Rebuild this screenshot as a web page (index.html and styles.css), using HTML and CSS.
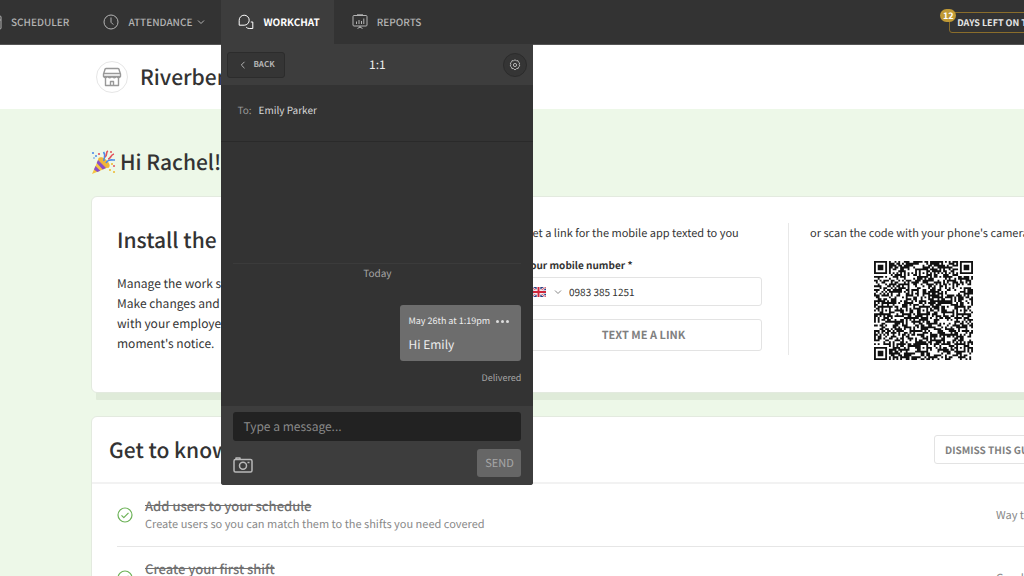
FILE: index.html
```html
<!DOCTYPE html>
<html lang="en">
<head>
<meta charset="utf-8">
<title>WorkChat</title>
<meta name="viewport" content="width=device-width, initial-scale=1">
<link rel="stylesheet" href="styles.css">
</head>
<body>
<div class="app">
  <header class="topbar">
    <nav class="nav">
      <div class="nav-item">
        <a class="nav-link" href="#scheduler">
          <svg class="nav-icon" viewBox="0 0 16 16"><rect x="1" y="2" width="14" height="13" rx="1"/><path d="M1 6h14M5 0v3M11 0v3"/></svg>
          <span>SCHEDULER</span>
        </a>
      </div>
      <div class="nav-item">
        <a class="nav-link" href="#attendance">
          <svg class="nav-icon" viewBox="0 0 16 16"><circle cx="8" cy="8" r="7"/><path d="M8 3.500v4.800l2.300 2.300"/></svg>
          <span>ATTENDANCE</span>
          <svg class="caret" viewBox="0 0 8 8"><path d="M1 2.500l3 3 3-3"/></svg>
        </a>
      </div>
      <div class="nav-item active">
        <a class="nav-link" href="#workchat">
          <svg class="nav-icon" viewBox="0 0 16 16"><path d="M1.200 11.200V6.300a5 5 0 1 1 5 4.900z"/><path d="M12.800 8h2v6.500h-3.600c-1.200 0-2.300-.5-3-1.300"/></svg>
          <span>WORKCHAT</span>
        </a>
        <section class="chat">
          <div class="chat-head">
            <button class="back" type="button"><svg viewBox="0 0 8 8"><path d="M5.500 .8L2.300 4l3.200 3.200"/></svg>BACK</button>
            <h2 class="chat-title">1:1</h2>
            <button class="gear" type="button" aria-label="Chat settings">
              <svg viewBox="0 0 12 12"><path d="M6 .8l1.300.9 1.600-.1.500 1.500 1.300.9-.5 1.500.6 1.500-1.300 1-.4 1.500-1.600.1L6 11l-1.500-1.400-1.600-.1-.4-1.500-1.300-1 .6-1.500-.5-1.500 1.300-.9.500-1.500 1.600.1z"/><circle cx="6" cy="6" r="1.600"/></svg>
            </button>
          </div>
          <div class="chat-to"><span class="to-label">To:</span><span>Emily Parker</span></div>
          <div class="chat-log">
            <div class="day">Today</div>
            <div class="bubble">
              <div class="bubble-meta"><time>May 26th at 1:19pm</time>
                <button class="more" type="button" aria-label="Message options"><i></i><i></i><i></i></button>
              </div>
              <p class="bubble-text">Hi Emily</p>
            </div>
            <div class="status">Delivered</div>
          </div>
          <form class="composer">
            <input class="message" type="text" placeholder="Type a message..." aria-label="Message">
            <div class="composer-actions">
              <button class="camera" type="button" aria-label="Add photo">
                <svg viewBox="0 0 20 16"><rect x="1" y="2.500" width="18" height="12.500" rx="1.500"/><circle cx="10" cy="8.800" r="3.500"/><path d="M3 2V1h4v1M14.500 5.500h2"/></svg>
              </button>
              <button class="send" type="button">SEND</button>
            </div>
          </form>
        </section>
      </div>
      <div class="nav-item">
        <a class="nav-link" href="#reports">
          <svg class="nav-icon" viewBox="0 0 16 16"><rect x="1" y="1.500" width="14" height="10.500" rx="1"/><path d="M4.500 10V7.500M7 10V6M9.500 10V7M11.800 10V4.500M8 12v2M5.500 14.500L8 13l2.500 1.500M5 .8h6"/></svg>
          <span>REPORTS</span>
        </a>
      </div>
    </nav>
    <a class="trial" href="#trial"><span class="trial-count">12</span>DAYS LEFT ON TRIAL</a>
  </header>

  <div class="location">
    <span class="store">
      <svg viewBox="0 0 20 20"><path d="M4 1.500h12a1 1 0 0 1 1 1L18.500 7v2.500h-17V7L3 2.500a1 1 0 0 1 1-1zM1.500 6.500h17M1.500 9.500c1.200 1.600 2.800 1.600 4 0 1.200 1.600 3.300 1.600 4.500 0 1.200 1.600 3.300 1.600 4.500 0 1.200 1.600 2.800 1.600 4 0M3.500 11v7.500h13V11M8.500 18.500v-4h3v4"/></svg>
    </span>
    <h1>Riverbend</h1>
  </div>

  <main class="content">
    <h2 class="greeting">
      <svg viewBox="0 0 25 25">
        <path d="M8 8L1 24l17-7z" fill="#f7c540"/>
        <ellipse cx="13" cy="12.500" rx="3.500" ry="7" transform="rotate(-48 13 12.500)" fill="#f0b63a"/>
        <path d="M7 10l8 8-3.300 1.400L5.700 13zM4.500 16l4.800 4.800-3 1.200L3 19.500z" fill="#8a4fc7"/>
        <path d="M13 11c-1-3 3-4-.500-9M15 13c2-4 5-3 9-3" fill="none" stroke="#4d8be8" stroke-width="1.600"/>
        <path d="M14 7c3-1 0-5 3-6M17 9c3 0 2-4 6-5" fill="none" stroke="#e2525c" stroke-width="1.600"/>
        <g fill="#e2525c"><circle cx="8" cy="4" r="1.100"/><circle cx="23" cy="16" r="1"/><circle cx="20" cy="2" r="1"/></g>
        <g fill="#4d8be8"><circle cx="2" cy="3" r="1.100"/><circle cx="5" cy="6" r="1"/><circle cx="3" cy="8" r=".8"/></g>
        <g fill="#edb92e"><circle cx="21" cy="14" r="1"/><circle cx="19" cy="20" r="1"/><circle cx="23" cy="22" r="1"/></g>
      </svg>
      Hi Rachel!
    </h2>

    <section class="card install">
      <div class="install-copy">
        <h2>Install the app</h2>
        <p>Manage the work schedule on the go.<br>Make changes and always stay in touch<br>with your employees and team at a<br>moment's notice.</p>
      </div>
      <form class="install-form">
        <p class="lead">Get a link for the mobile app texted to you</p>
        <label for="mobile">Your mobile number *</label>
        <div class="phone">
          <button class="country" type="button" aria-label="Country code: United Kingdom">
            <svg class="flag" viewBox="0 0 15 10"><path fill="#2b3f80" d="M0 0h15v10H0z"/><path d="M0 0l15 10M15 0L0 10" stroke="#fff" stroke-width="2.200"/><path d="M0 0l15 10M15 0L0 10" stroke="#d0273c" stroke-width=".8"/><path d="M7.500 0v10M0 5h15" stroke="#fff" stroke-width="3.600"/><path d="M7.500 0v10M0 5h15" stroke="#d0273c" stroke-width="2"/></svg>
            <svg class="caret" viewBox="0 0 8 8"><path d="M1 2.500l3 3 3-3"/></svg>
          </button>
          <input id="mobile" type="tel" value="0983 385 1251">
        </div>
        <button class="outline text-link" type="button">TEXT ME A LINK</button>
      </form>
      <div class="install-scan">
        <p class="lead">or scan the code with your phone's camera</p>
        <svg class="qr" viewBox="0 0 53 53" role="img" aria-label="QR code"><path id="qr-modules"/></svg>
      </div>
    </section>

    <section class="card guide">
      <div class="guide-head">
        <h2>Get to know us</h2>
        <button class="outline dismiss" type="button">DISMISS THIS GUIDE</button>
      </div>
      <ul class="steps">
        <li>
          <svg class="check" viewBox="0 0 16 16"><circle cx="8" cy="8" r="7"/><path d="M4.500 8.300l2.300 2.300 4.700-4.800"/></svg>
          <div class="step-copy"><h3>Add users to your schedule</h3><p>Create users so you can match them to the shifts you need covered</p></div>
          <span class="praise">Way to go!</span>
        </li>
        <li>
          <svg class="check" viewBox="0 0 16 16"><circle cx="8" cy="8" r="7"/><path d="M4.500 8.300l2.300 2.300 4.700-4.800"/></svg>
          <div class="step-copy"><h3>Create your first shift</h3><p>Start building your schedule</p></div>
          <span class="praise">Good job!</span>
        </li>
      </ul>
    </section>
  </main>
</div>
<script src="qr.js"></script>
</body>
</html>
```
FILE: styles.css
```css
* { box-sizing: border-box; }

body {
  margin: 0;
  height: 100vh;
  overflow: hidden;
  background: #edf8e8;
  color: #333;
  font-family: "Noto Sans CJK SC", "Noto Sans", sans-serif;
  font-size: 12px;
  line-height: 20px;
  text-rendering: geometricPrecision;
}

h1, h2, h3, p, ul { margin: 0; padding: 0; }
h1, h2, h3 { font-weight: 500; }
button, input { font: inherit; color: inherit; margin: 0; text-rendering: inherit; }
button { padding: 0; border: 0; background: none; cursor: pointer; }
a { color: inherit; text-decoration: none; }
svg { display: block; flex: none; fill: none; stroke-linejoin: round; }

.app { margin-right: -165px; }

/* Top bar */
.topbar {
  display: flex;
  align-items: center;
  justify-content: space-between;
  height: 45px;
  padding-right: 134px;
  background: #333;
  border-bottom: 1px solid #555;
  color: #b4b4b4;
}
.nav { display: flex; margin-left: -32px; height: 44px; }
.nav-item { position: relative; }
.nav-link {
  display: flex;
  align-items: center;
  height: 44px;
  padding: 0 16px 0 18px;
  gap: 9px;
  font-size: 10px;
  font-weight: 500;
}
.nav-icon { width: 16px; height: 16px; stroke: currentColor; }
.caret { width: 8px; height: 8px; stroke: currentColor; }
.nav-link .caret { margin-left: -4px; }
.active .nav-link { padding: 0 14px 0 17px; background: #3d3d3d; color: #fff; font-weight: 700; }
.trial {
  position: relative;
  height: 21px;
  padding: 0 7px;
  border: 1px solid #8a6d2b;
  border-radius: 3px;
  color: #e6e6e6;
  font-size: 9px;
  font-weight: 700;
  line-height: 19px;
}
.trial-count {
  position: absolute;
  top: -4px;
  left: -10px;
  width: 16px;
  border-radius: 7px;
  background: #c09a36;
  color: #fff;
  line-height: 13px;
  text-align: center;
}

/* Chat panel */
.chat {
  position: absolute;
  top: 100%;
  left: 0;
  z-index: 2;
  width: 312px;
  border-radius: 0 0 3px 3px;
  background: #333;
  color: #d8d8d8;
  overflow: hidden;
}
.chat-head {
  display: grid;
  grid-template-columns: 1fr auto 1fr;
  align-items: center;
  height: 41px;
  padding: 0 6px;
  background: #3d3d3d;
}
.back {
  display: flex;
  align-items: center;
  gap: 6px;
  width: 58px;
  height: 26px;
  padding-left: 11px;
  border: 1px solid #2c2c2c;
  border-radius: 3px;
  background: #353535;
  color: #b4b4b4;
  font-size: 8px;
  font-weight: 700;
}
.back svg { width: 8px; height: 8px; stroke: currentColor; }
.chat-title { font-size: 12px; font-weight: 400; color: #eee; }
.gear {
  display: grid;
  place-items: center;
  justify-self: end;
  width: 24px;
  height: 24px;
  border: 1px solid #2c2c2c;
  border-radius: 50%;
  background: #353535;
}
.gear svg { width: 12px; height: 12px; stroke: #b4b4b4; }
.chat-to {
  display: flex;
  gap: 7px;
  height: 57px;
  padding: 15px 16px;
  border-bottom: 1px solid #2a2a2a;
  font-size: 10px;
}
.to-label { color: #999; }
.chat-log {
  display: flex;
  flex-direction: column;
  align-items: flex-end;
  justify-content: flex-end;
  height: 264px;
  padding: 0 12px 18px;
}
.day {
  align-self: stretch;
  border-top: 1px solid #3b3b3b;
  color: #a6a6a6;
  font-size: 10px;
  line-height: 18px;
  text-align: center;
}
.bubble {
  width: 121px;
  margin: 23px 0 7px;
  padding: 6px 8px 2px;
  border-radius: 3px;
  background: #6d6d6d;
  color: #eee;
}
.bubble-meta { display: flex; justify-content: space-between; font-size: 9px; white-space: nowrap; }
.more { display: flex; align-items: center; gap: 2px; padding-right: 4px; }
.more i { width: 3px; height: 3px; border-radius: 50%; background: #ddd; }
.bubble-text { line-height: 28px; }
.status { color: #a6a6a6; font-size: 9px; }
.composer { padding: 6px 12px 8px; background: #3d3d3d; }
.message {
  display: block;
  width: 100%;
  height: 29px;
  padding: 0 10px;
  border: 0;
  border-radius: 3px;
  background: #222;
}
.message::placeholder { color: #8a8a8a; opacity: 1; }
.composer-actions { display: flex; align-items: center; justify-content: space-between; margin-top: 8px; }
.camera { padding-top: 4px; }
.camera svg { width: 20px; height: 16px; stroke: #b8b8b8; stroke-width: 1.5; }
.send {
  width: 44px;
  height: 28px;
  border-radius: 3px;
  background: #666;
  color: #a6a6a6;
  font-size: 11px;
}

/* Location strip */
.location {
  display: flex;
  align-items: center;
  gap: 12px;
  height: 64px;
  padding-left: 96px;
  background: #fff;
}
.store {
  display: grid;
  place-items: center;
  width: 32px;
  height: 32px;
  border: 1px solid #e6e6e6;
  border-radius: 50%;
}
.store svg { width: 20px; height: 20px; stroke: #999; stroke-width: 1.4; }
h1, .content h2 { font-size: 21px; line-height: 28px; }

/* Content */
.content { padding: 39px 91px 0; }
.greeting { display: flex; align-items: center; gap: 4px; margin-bottom: 20px; }
.greeting svg { width: 25px; height: 25px; }
.card { border: 1px solid #e3eadf; border-radius: 6px; background: #fff; }
.install {
  display: flex;
  height: 197px;
  padding: 26px 40px 0 25px;
  box-shadow: 0 12px 0 -5px #dfebd9;
}
.install-copy { flex: 1; padding-top: 3px; }
.install-copy p { margin-top: 20px; white-space: nowrap; }
.lead { font-size: 11px; white-space: nowrap; }
.install-form {
  width: 264px;
  height: 132px;
  padding-right: 26px;
  border-right: 1px solid #e8e8e8;
}
.install-form label { display: block; margin-top: 13px; font-size: 10px; font-weight: 700; line-height: 18px; }
.phone {
  display: flex;
  align-items: center;
  height: 29px;
  margin: 3px 0 13px;
  border: 1px solid #e3e3e3;
  border-radius: 3px;
}
.country { display: flex; align-items: center; gap: 8px; padding-left: 5px; color: #888; }
.flag { width: 15px; height: 10px; }
.phone input { flex: 1; min-width: 0; padding: 0 7px; border: 0; background: none; font-size: 10px; }
.outline {
  border: 1px solid #e3e3e3;
  border-radius: 3px;
  background: #fff;
  color: #808080;
  font-weight: 700;
}
.text-link { display: block; width: 100%; height: 32px; font-size: 11px; }
.install-scan { width: 268px; padding-left: 21px; }
.qr { width: 99px; height: 99px; margin: 18px 0 0 64px; fill: #111; }

.guide { margin-top: 23px; }
.guide-head {
  display: flex;
  align-items: center;
  justify-content: space-between;
  height: 67px;
  padding: 0 41px 0 17px;
  border-bottom: 2px solid #f2f2f2;
}
.dismiss { height: 29px; padding: 0 10px; font-size: 10px; }
.steps { padding: 0 25px; list-style: none; }
.steps li {
  display: flex;
  align-items: center;
  gap: 12px;
  height: 63px;
  border-bottom: 1px solid #e6e6e6;
  color: #888;
}
.check { width: 16px; height: 16px; stroke: #6cb257; stroke-width: 1.2; }
.step-copy { flex: 1; }
.step-copy h3 { color: #707070; font-size: 13px; line-height: 18px; text-decoration: line-through; }
.step-copy p { font-size: 11px; line-height: 18px; }
.praise { width: 76px; font-size: 11px; }
```
FILE: qr.js
```js
// Builds the code's module grid: finder, alignment and timing patterns around a seeded data area.
(function () {
  var size = 53;
  var seed = 90731;
  function next() {
    seed = (seed * 1103515245 + 12345) % 2147483648;
    return seed / 2147483648;
  }
  function ring(x, y, cx, cy, reach) {
    var d = Math.max(Math.abs(x - cx), Math.abs(y - cy));
    return d > reach ? null : d;
  }
  function dark(x, y) {
    var random = next() < 0.54;
    var finders = [[3, 3], [size - 4, 3], [3, size - 4]];
    for (var i = 0; i < finders.length; i++) {
      var d = ring(x, y, finders[i][0], finders[i][1], 4);
      if (d !== null) return d !== 4 && d !== 2;
    }
    var marks = [6, 26, 46];
    for (var a = 0; a < 3; a++) {
      for (var b = 0; b < 3; b++) {
        if ((a === 0 && b !== 1) || (b === 0 && a !== 1)) continue;
        var m = ring(x, y, marks[a], marks[b], 2);
        if (m !== null) return m !== 1;
      }
    }
    if (x === 6 || y === 6) return (x + y) % 2 === 0;
    return random;
  }
  var path = "";
  for (var y = 0; y < size; y++) {
    for (var x = 0; x < size; x++) {
      if (dark(x, y)) path += "M" + x + " " + y + "h1v1h-1z";
    }
  }
  document.getElementById("qr-modules").setAttribute("d", path);
})();
```
